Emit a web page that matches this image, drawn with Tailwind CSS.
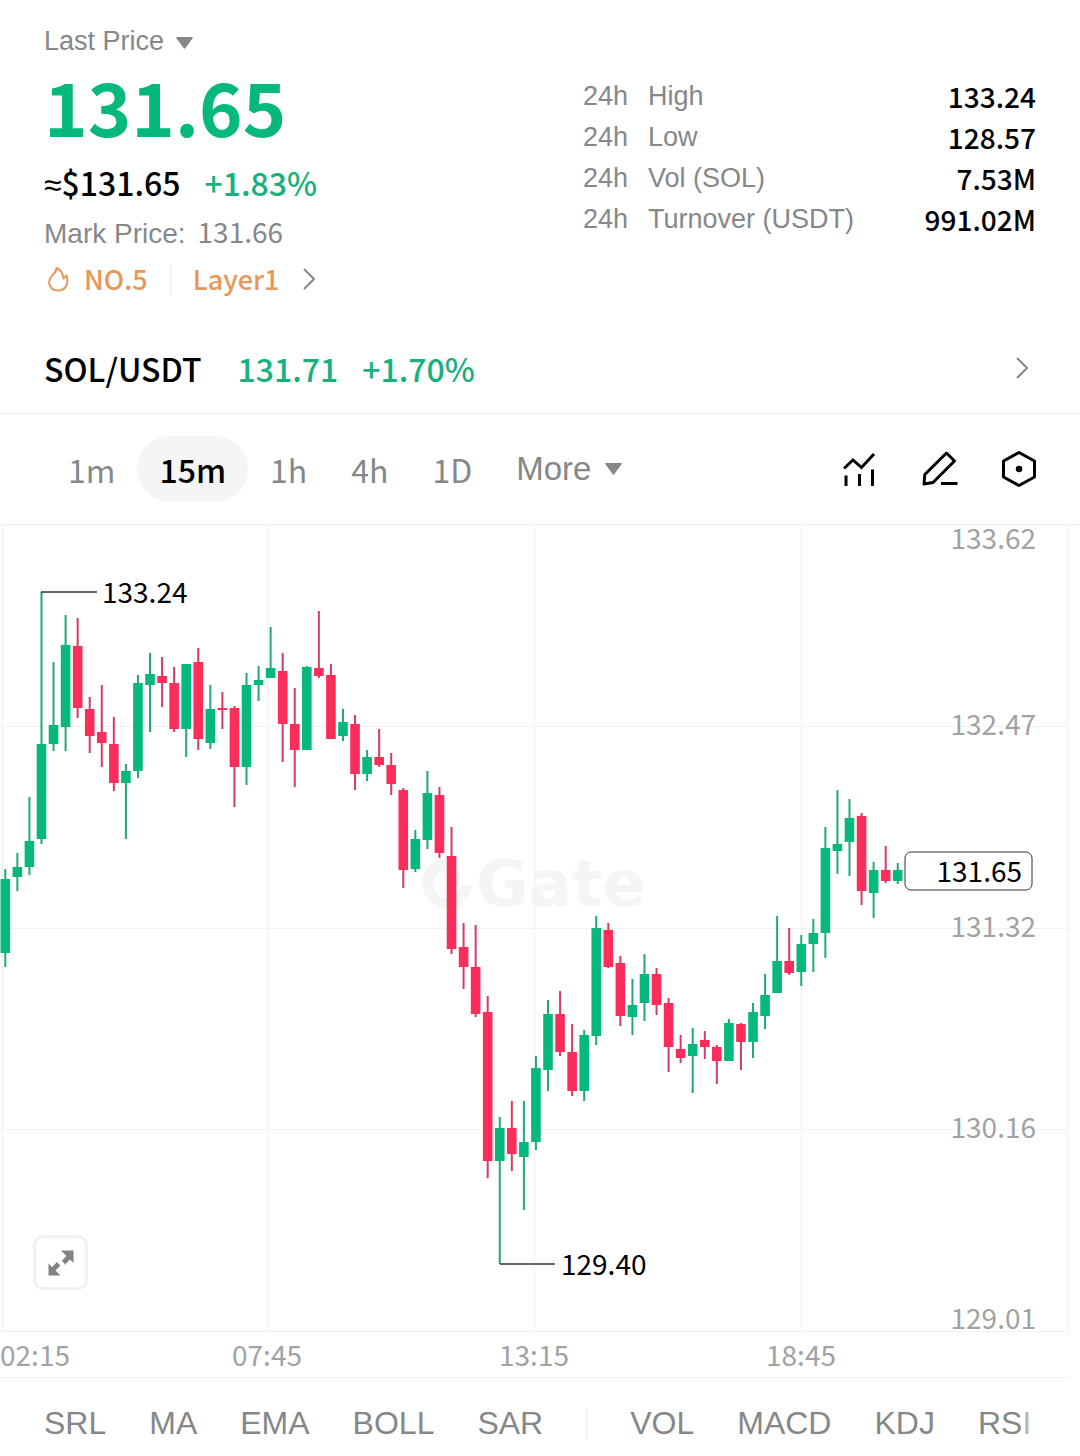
<!DOCTYPE html>
<html lang="en">
<head>
    <meta charset="UTF-8">
    <meta name="viewport" content="width=device-width, initial-scale=1.0">
    <title>SOL/USDT 131.65</title>
    <script src="https://cdn.jsdelivr.net/npm/@tailwindcss/browser@4"></script>
</head>
<body class="bg-white text-[#858889] font-['Liberation_Sans',sans-serif] overflow-x-hidden">

    <!-- Price summary -->
    <header class="grid grid-cols-[1fr_453px] px-11">
        <div class="pt-[25px]">
            <button class="flex items-center gap-3 text-[27px] leading-8">
                Last Price
                <svg class="w-[17px] h-3 mt-1" viewBox="0 0 17 12" fill="currentColor"><path d="M1 0h15q1.500 0 .6 1.200L9.500 11q-1 1.300-2 0L.4 1.200Q-.5 0 1 0z"/></svg>
            </button>
            <h1 class="mt-[11px] text-[74px] leading-[74px] font-bold text-[#06b87c] font-['Noto_Sans_CJK_SC',sans-serif]">131.65</h1>
            <p class="mt-5 flex gap-6 text-[32px] leading-10 font-medium font-['Noto_Sans_CJK_SC',sans-serif]">
                <span class="text-black"><span class="font-['Liberation_Sans'] leading-none">≈</span>$131.65</span>
                <span class="text-[#18b07c]">+1.83%</span>
            </p>
            <p class="mt-[13px] flex items-baseline gap-3 text-[28px] leading-8">
                Mark Price: <span class="font-['Noto_Sans_CJK_SC',sans-serif]">131.66</span>
            </p>
            <div class="mt-[13px] flex items-center text-[27px] leading-8 font-medium text-[#e8975a] font-['Noto_Sans_CJK_SC',sans-serif]">
                <svg class="w-7 h-7" viewBox="0 0 28 28" fill="none" stroke="currentColor" stroke-width="2" stroke-linejoin="round">
                    <path d="M12.500 3C13 7 9.500 8.500 7 12C3 17.500 6 25.500 14 25.500C22 25.500 25 18 22.500 10.500C21.500 11 21 12.500 19.500 13.500C19 9 17 5 12.500 3Z"/>
                </svg>
                <a href="#" class="ml-3">NO.5</a>
                <span class="mx-[22px] w-px h-8 bg-[#f0f0f0]"></span>
                <a href="#" class="flex items-center gap-6">Layer1
                    <svg class="w-3 h-[22px]" viewBox="0 0 12 22" fill="none" stroke="#858889" stroke-width="2"><path d="M1 1l10 10L1 21"/></svg>
                </a>
            </div>
        </div>

        <dl class="pt-[76px] text-[27px] leading-[41px]">
            <div class="flex"><dt class="flex gap-5"><span>24h</span> High</dt><dd class="ml-auto text-black font-medium text-[28px] font-['Noto_Sans_CJK_SC',sans-serif]">133.24</dd></div>
            <div class="flex"><dt class="flex gap-5"><span>24h</span> Low</dt><dd class="ml-auto text-black font-medium text-[28px] font-['Noto_Sans_CJK_SC',sans-serif]">128.57</dd></div>
            <div class="flex"><dt class="flex gap-5"><span>24h</span> Vol (SOL)</dt><dd class="ml-auto text-black font-medium text-[28px] font-['Noto_Sans_CJK_SC',sans-serif]">7.53M</dd></div>
            <div class="flex"><dt class="flex gap-5"><span>24h</span> Turnover (USDT)</dt><dd class="ml-auto text-black font-medium text-[28px] font-['Noto_Sans_CJK_SC',sans-serif]">991.02M</dd></div>
        </dl>
    </header>

    <!-- Spot pair -->
    <a href="#" class="mt-7 h-[91px] px-11 flex items-center border-b border-[#efefef] text-[32px] font-medium text-[#18b07c] font-['Noto_Sans_CJK_SC',sans-serif]">
        <span class="text-black">SOL/USDT</span>
        <span class="ml-9">131.71</span>
        <span class="ml-6">+1.70%</span>
        <svg class="ml-auto mr-2 w-3 h-[22px]" viewBox="0 0 12 22" fill="none" stroke="#858889" stroke-width="2"><path d="M1 1l10 10L1 21"/></svg>
    </a>

    <!-- Intervals and chart tools -->
    <nav class="h-[110px] pl-[46px] pr-11 flex items-center text-[32px] font-['Noto_Sans_CJK_SC',sans-serif]">
        <button class="px-[22px]">1m</button>
        <button class="px-[22px] h-[66px] rounded-full bg-[#f5f5f5] text-black font-medium">15m</button>
        <button class="px-[22px]">1h</button>
        <button class="px-[22px]">4h</button>
        <button class="px-[22px]">1D</button>
        <button class="px-[22px] flex items-center gap-[14px] text-[33px] font-['Liberation_Sans',sans-serif]">More
            <svg class="w-[17px] h-3" viewBox="0 0 17 12" fill="currentColor"><path d="M1 0h15q1.500 0 .6 1.200L9.500 11q-1 1.300-2 0L.4 1.200Q-.5 0 1 0z"/></svg>
        </button>
        <div class="ml-auto flex gap-11 text-black">
            <button aria-label="Indicators">
                <svg class="w-9 h-9" viewBox="-2 0 36 36" fill="none" stroke="currentColor" stroke-width="3"><path d="M2 17.500L11 9l8.500 7.500L32 3M4 24.500V35M17.500 23V35M30.500 18.500V35"/></svg>
            </button>
            <button aria-label="Draw">
                <svg class="w-9 h-9 overflow-visible" viewBox="-2 0 36 36" fill="none" stroke="currentColor" stroke-width="3" stroke-linejoin="round"><path d="M24.500 2l8 8L11 31.500l-9 1.500.8-9.500zM19 32.500h16.500"/></svg>
            </button>
            <button aria-label="Settings">
                <svg class="w-9 h-9" viewBox="0 0 36 36" fill="none" stroke="currentColor" stroke-width="3" stroke-linejoin="round"><path d="M19 1.500l15.500 8.500v16L19 34.500 3.500 26V10z"/><circle cx="19" cy="18" r="3.300" fill="currentColor" stroke="none"/></svg>
            </button>
        </div>
    </nav>

    <!-- Candlestick chart -->
    <main class="relative">
        <svg id="chart" class="block w-full overflow-visible font-['Noto_Sans_CJK_SC',sans-serif] text-[28px]" viewBox="0 524 1080 854">
            <g stroke="#f1f1f1">
                <path d="M0 524.500H1080M0 726.500H1069M0 928.500H1069M0 1129.500H1069M0 1331.500H1069M0 1377.500H1069"/>
                <path d="M2.500 525V1331M267.500 525V1331M534.500 525V1331M801.500 525V1331M1068.500 525V1331"/>
            </g>
            <!-- watermark -->
            <g fill="#f4f5f5">
                <path d="M446 858a25 25 0 1 0 26 27h-12a13.500 13.500 0 1 1-14-14z"/>
                <path d="M447 871h13v14h-13z"/>
                <text x="476" y="906" class="font-['DejaVu_Sans'] font-bold text-[64px]">Gate</text>
            </g>
            <g id="candles"></g>
            <path d="M41 592H97M500 1264H555" stroke="#333" stroke-width="1.500"/>
            <g fill="#000">
                <text x="102" y="603">133.24</text>
                <text x="561" y="1275">129.40</text>
                <rect x="905" y="852" width="127" height="38" rx="6" fill="#fff" stroke="#333"/>
                <text x="1022" y="882" text-anchor="end">131.65</text>
            </g>
            <g fill="#a0a2a3" text-anchor="end">
                <text x="1036" y="549">133.62</text>
                <text x="1036" y="735">132.47</text>
                <text x="1036" y="937">131.32</text>
                <text x="1036" y="1138">130.16</text>
                <text x="1036" y="1329">129.01</text>
            </g>
            <g fill="#a0a2a3" text-anchor="middle">
                <text x="35" y="1366">02:15</text>
                <text x="267" y="1366">07:45</text>
                <text x="534" y="1366">13:15</text>
                <text x="801" y="1366">18:45</text>
            </g>
        </svg>
        <button aria-label="Full screen" class="absolute left-[33px] bottom-[88px] w-[55px] h-[55px] flex items-center justify-center rounded-[10px] border-3 border-[#f1f1f1] bg-white">
            <svg class="w-[26px] h-[26px]" viewBox="0 0 26 26" fill="#808283"><path d="M13 .5h12.500V13l-3.500-3.500-5.500 5.500-3.500-3.500 5.500-5.500zM.5 13.500L4 17l5-5 3.500 3.500-5 5 5 5H.5z"/><path d="M10 13l3-3 4 4-3 3z" fill="#fff"/></svg>
        </button>
    </main>

    <!-- Indicator tabs -->
    <div class="relative overflow-hidden mr-[45px]">
        <div class="h-[90px] pl-11 flex items-center gap-[43px] text-[32px] whitespace-nowrap">
            <button>SRL</button>
            <button>MA</button>
            <button>EMA</button>
            <button>BOLL</button>
            <button>SAR</button>
            <span class="w-px h-8 shrink-0 bg-[#efefef]"></span>
            <button>VOL</button>
            <button>MACD</button>
            <button>KDJ</button>
            <button>RSI</button>
        </div>
        <div class="absolute right-0 inset-y-0 w-4 bg-gradient-to-r from-white/0 to-white/80"></div>
    </div>

    <script>
        // [high, body top, body bottom, low, up]
        const candles = [
            [869,879,953,967,1],[853,867,877,891,1],[797,841,867,875,1],[592,744,839,844,1],[662,725,744,751,1],
            [615,645,727,751,1],[618,646,708,718,0],[697,709,736,753,0],[685,732,743,767,0],[717,744,783,791,0],
            [764,771,783,839,1],[675,683,771,778,1],[653,674,685,732,1],[657,676,683,707,0],[667,683,729,732,0],
            [664,664,729,757,1],[648,662,739,750,0],[685,709,743,749,1],[692,708,710,729,0],[706,708,767,807,0],
            [673,685,767,785,1],[666,680,685,701,1],[627,668,678,678,1],[653,671,724,762,0],[688,724,750,787,0],
            [666,667,750,750,1],[611,668,676,678,0],[664,675,739,739,0],[709,722,736,741,1],[715,724,774,790,0],
            [750,757,774,781,1],[729,757,765,767,0],[753,765,784,795,0],[788,790,870,888,0],[830,839,869,872,1],
            [771,793,840,849,1],[787,795,853,858,0],[827,856,949,954,0],[923,947,967,989,0],[925,967,1014,1017,0],
            [996,1012,1161,1178,0],[1117,1128,1161,1264,1],[1101,1128,1154,1171,0],[1101,1142,1157,1210,1],[1056,1068,1142,1150,1],
            [1000,1014,1070,1091,1],[991,1014,1052,1056,0],[1024,1052,1091,1096,0],[1030,1035,1091,1101,1],[916,928,1036,1045,1],
            [923,930,967,968,0],[956,963,1016,1026,0],[979,1005,1017,1035,1],[954,974,1003,1021,1],[968,974,1005,1015,0],
            [998,1003,1047,1072,0],[1035,1049,1058,1063,0],[1028,1044,1056,1093,1],[1031,1040,1047,1059,0],[1045,1047,1061,1084,0],
            [1019,1023,1061,1061,1],[1023,1024,1042,1070,0],[1003,1012,1042,1058,1],[974,995,1016,1029,1],[916,961,993,993,1],
            [928,961,973,975,0],[935,944,972,986,1],[919,933,944,972,1],[827,848,933,958,1],[790,844,851,874,1],
            [799,818,842,876,1],[813,816,891,905,0],[862,870,893,918,1],[846,870,881,883,0],[863,870,881,884,1]
        ];
        const step = 12.06;

        document.getElementById('candles').innerHTML = candles.map(([high, top, bottom, low, up], i) => {
            const x = 5.3 + i * step;
            const body = up ? '#06b87c' : '#fb2e5b';
            const wick = up ? '#1fa878' : '#d63c62';
            return `<rect x="${x - 1}" y="${high}" width="2" height="${low - high}" fill="${wick}"/>
                    <rect x="${x - 4.8}" y="${top}" width="9.6" height="${bottom - top}" fill="${body}"/>`;
        }).join('');
    </script>
</body>
</html>
